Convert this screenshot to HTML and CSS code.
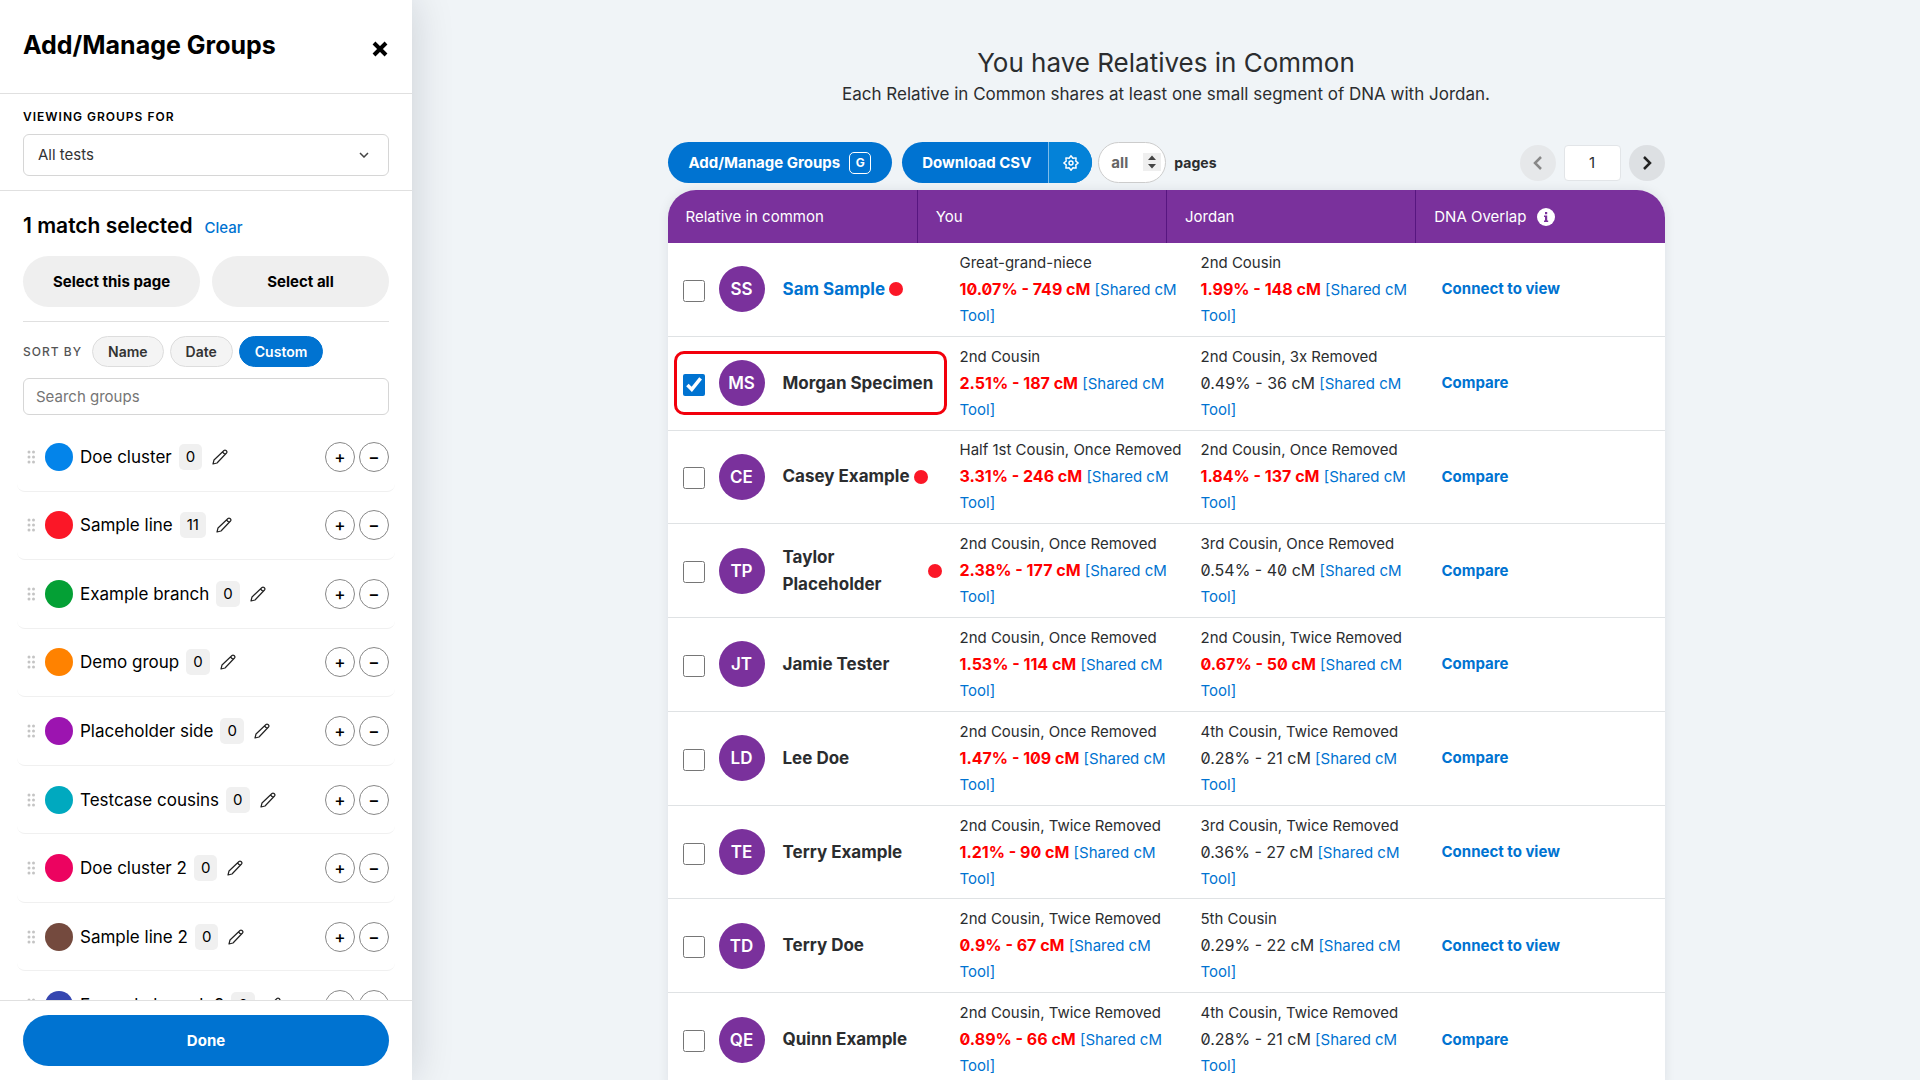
FILE: index.html
```html
<!doctype html>
<html lang="en">

<head>
	<meta charset="utf-8">
	<meta name="viewport" content="width=device-width, initial-scale=1">
	<title>Relatives in Common</title>
	<link rel="stylesheet" href="styles.css">
</head>

<body>

	<!-- shared icons -->
	<svg class="sprite" aria-hidden="true">
		<symbol id="grip" viewBox="0 0 8 14">
			<g fill="#c4c4c4">
				<circle cx="2" cy="2" r="1.5" /><circle cx="6.500" cy="2" r="1.5" />
				<circle cx="2" cy="7" r="1.5" /><circle cx="6.500" cy="7" r="1.5" />
				<circle cx="2" cy="12" r="1.5" /><circle cx="6.500" cy="12" r="1.5" />
			</g>
		</symbol>
		<symbol id="pencil" viewBox="0 0 16 16">
			<path d="M1 15l1-4L12 1.500q1-.9 2 0l.5.5q.9 1 0 2L5 14zM10.500 3l2.500 2.500" fill="none" stroke="#222" stroke-width="1.200" stroke-linejoin="round" />
		</symbol>
	</svg>

	<aside class="panel">

		<header class="panel-head">
			<h2>Add/Manage Groups</h2>
			<button class="close" aria-label="Close">
				<svg width="16" height="16" viewBox="0 0 16 16"><path d="M2 2l12 12M14 2L2 14" stroke="#000" stroke-width="4" /></svg>
			</button>
		</header>

		<div class="viewing">
			<label for="selTests">Viewing groups for</label>
			<div class="select-wrap">
				<select id="selTests"><option>All tests</option></select>
				<svg class="chevron" width="10" height="6" viewBox="0 0 10 6"><path d="M1 1l4 4 4-4" fill="none" stroke="#444" stroke-width="1.500" /></svg>
			</div>
		</div>

		<div class="picks">
			<div class="selected"><strong>1 match selected</strong> <a href="#">Clear</a></div>
			<div class="pick-buttons">
				<button>Select this page</button>
				<button>Select all</button>
			</div>
		</div>

		<div class="sort">
			<span>Sort by</span>
			<button>Name</button>
			<button>Date</button>
			<button class="active">Custom</button>
		</div>

		<input class="search" type="search" placeholder="Search groups" aria-label="Search groups">

		<div class="groups">
			<ul>
				<li>
					<svg class="grip"><use href="#grip" /></svg><i class="swatch blue"></i>
					<span class="name">Doe cluster</span><span class="count">0</span>
					<button class="edit" aria-label="Edit"><svg><use href="#pencil" /></svg></button>
					<button class="round" aria-label="Add">+</button><button class="round" aria-label="Remove">−</button>
				</li>
				<li>
					<svg class="grip"><use href="#grip" /></svg><i class="swatch red"></i>
					<span class="name">Sample line</span><span class="count">11</span>
					<button class="edit" aria-label="Edit"><svg><use href="#pencil" /></svg></button>
					<button class="round" aria-label="Add">+</button><button class="round" aria-label="Remove">−</button>
				</li>
				<li>
					<svg class="grip"><use href="#grip" /></svg><i class="swatch green"></i>
					<span class="name">Example branch</span><span class="count">0</span>
					<button class="edit" aria-label="Edit"><svg><use href="#pencil" /></svg></button>
					<button class="round" aria-label="Add">+</button><button class="round" aria-label="Remove">−</button>
				</li>
				<li>
					<svg class="grip"><use href="#grip" /></svg><i class="swatch orange"></i>
					<span class="name">Demo group</span><span class="count">0</span>
					<button class="edit" aria-label="Edit"><svg><use href="#pencil" /></svg></button>
					<button class="round" aria-label="Add">+</button><button class="round" aria-label="Remove">−</button>
				</li>
				<li>
					<svg class="grip"><use href="#grip" /></svg><i class="swatch purple"></i>
					<span class="name">Placeholder side</span><span class="count">0</span>
					<button class="edit" aria-label="Edit"><svg><use href="#pencil" /></svg></button>
					<button class="round" aria-label="Add">+</button><button class="round" aria-label="Remove">−</button>
				</li>
				<li>
					<svg class="grip"><use href="#grip" /></svg><i class="swatch teal"></i>
					<span class="name">Testcase cousins</span><span class="count">0</span>
					<button class="edit" aria-label="Edit"><svg><use href="#pencil" /></svg></button>
					<button class="round" aria-label="Add">+</button><button class="round" aria-label="Remove">−</button>
				</li>
				<li>
					<svg class="grip"><use href="#grip" /></svg><i class="swatch pink"></i>
					<span class="name">Doe cluster 2</span><span class="count">0</span>
					<button class="edit" aria-label="Edit"><svg><use href="#pencil" /></svg></button>
					<button class="round" aria-label="Add">+</button><button class="round" aria-label="Remove">−</button>
				</li>
				<li>
					<svg class="grip"><use href="#grip" /></svg><i class="swatch brown"></i>
					<span class="name">Sample line 2</span><span class="count">0</span>
					<button class="edit" aria-label="Edit"><svg><use href="#pencil" /></svg></button>
					<button class="round" aria-label="Add">+</button><button class="round" aria-label="Remove">−</button>
				</li>
				<li>
					<svg class="grip"><use href="#grip" /></svg><i class="swatch indigo"></i>
					<span class="name">Example branch 2</span><span class="count">0</span>
					<button class="edit" aria-label="Edit"><svg><use href="#pencil" /></svg></button>
					<button class="round" aria-label="Add">+</button><button class="round" aria-label="Remove">−</button>
				</li>
			</ul>
		</div>

		<footer class="panel-foot"><button>Done</button></footer>

	</aside>

	<main>

		<h1>You have Relatives in Common</h1>
		<p class="intro">Each Relative in Common shares at least one small segment of DNA with Jordan.</p>

		<div class="toolbar">
			<button class="pill">Add/Manage Groups <kbd>G</kbd></button>
			<div class="split">
				<button class="csv">Download CSV</button>
				<button class="gear" aria-label="CSV settings">
					<svg width="16" height="16" viewBox="0 0 16 16" fill="none" stroke="#fff" stroke-width="1.400" stroke-linejoin="round">
						<path d="M8 .8L9.900 3.200 13.100 2.900 12.800 6.100 15.200 8 12.800 9.900 13.100 13.100 9.900 12.800 8 15.200 6.100 12.800 2.900 13.100 3.200 9.900.8 8 3.200 6.100 2.900 2.900 6.100 3.200z" />
						<circle cx="8" cy="8" r="2" />
					</svg>
				</button>
			</div>
			<div class="pages">
				<input id="txtPages" type="text" value="all">
				<svg class="spin" width="18" height="18" viewBox="0 0 18 18"><path d="M5 7l4-4.500L13 7zM5 11l4 4.500 4-4.500z" fill="#444" /></svg>
			</div>
			<label for="txtPages">pages</label>

			<nav class="pager">
				<button disabled aria-label="Previous page"><svg width="12" height="16" viewBox="0 0 12 16"><path d="M9 2L3 8l6 6" fill="none" stroke="currentColor" stroke-width="2.500" /></svg></button>
				<input type="text" value="1" aria-label="Page">
				<button aria-label="Next page"><svg width="12" height="16" viewBox="0 0 12 16"><path d="M3 2l6 6-6 6" fill="none" stroke="currentColor" stroke-width="2.500" /></svg></button>
			</nav>
		</div>

		<table>
			<thead>
				<tr>
					<th>Relative in common</th>
					<th>You</th>
					<th>Jordan</th>
					<th>DNA Overlap
						<svg class="info" width="18" height="18" viewBox="0 0 18 18"><circle cx="9" cy="9" r="9" fill="#fff" /><path d="M8 4h2.200v2.200H8zM7 7.500h3.200v5h1V14H7v-1.500h1V9H7z" fill="#7a319c" /></svg>
					</th>
				</tr>
			</thead>
			<tbody>
				<tr>
					<td class="who"><input type="checkbox" aria-label="Sam Sample"><span class="avatar">SS</span><a href="#" class="person">Sam Sample</a><i class="dot"></i></td>
					<td>Great-grand-niece<br><b class="near">10.07% - 749 cM</b> <a href="#">[Shared cM Tool]</a></td>
					<td>2nd Cousin<br><b class="near">1.99% - 148 cM</b> <a href="#">[Shared cM Tool]</a></td>
					<td class="action"><a href="#">Connect to view</a></td>
				</tr>
				<tr>
					<td class="who marked"><input type="checkbox" aria-label="Morgan Specimen" checked><span class="avatar">MS</span><span class="person">Morgan Specimen</span></td>
					<td>2nd Cousin<br><b class="near">2.51% - 187 cM</b> <a href="#">[Shared cM Tool]</a></td>
					<td>2nd Cousin, 3x Removed<br><span class="far">0.49% - 36 cM</span> <a href="#">[Shared cM Tool]</a></td>
					<td class="action"><a href="#">Compare</a></td>
				</tr>
				<tr>
					<td class="who"><input type="checkbox" aria-label="Casey Example"><span class="avatar">CE</span><span class="person">Casey Example</span><i class="dot"></i></td>
					<td>Half 1st Cousin, Once Removed<br><b class="near">3.31% - 246 cM</b> <a href="#">[Shared cM Tool]</a></td>
					<td>2nd Cousin, Once Removed<br><b class="near">1.84% - 137 cM</b> <a href="#">[Shared cM Tool]</a></td>
					<td class="action"><a href="#">Compare</a></td>
				</tr>
				<tr>
					<td class="who"><input type="checkbox" aria-label="Taylor Placeholder"><span class="avatar">TP</span><span class="person">Taylor Placeholder</span><i class="dot"></i></td>
					<td>2nd Cousin, Once Removed<br><b class="near">2.38% - 177 cM</b> <a href="#">[Shared cM Tool]</a></td>
					<td>3rd Cousin, Once Removed<br><span class="far">0.54% - 40 cM</span> <a href="#">[Shared cM Tool]</a></td>
					<td class="action"><a href="#">Compare</a></td>
				</tr>
				<tr>
					<td class="who"><input type="checkbox" aria-label="Jamie Tester"><span class="avatar">JT</span><span class="person">Jamie Tester</span></td>
					<td>2nd Cousin, Once Removed<br><b class="near">1.53% - 114 cM</b> <a href="#">[Shared cM Tool]</a></td>
					<td>2nd Cousin, Twice Removed<br><b class="near">0.67% - 50 cM</b> <a href="#">[Shared cM Tool]</a></td>
					<td class="action"><a href="#">Compare</a></td>
				</tr>
				<tr>
					<td class="who"><input type="checkbox" aria-label="Lee Doe"><span class="avatar">LD</span><span class="person">Lee Doe</span></td>
					<td>2nd Cousin, Once Removed<br><b class="near">1.47% - 109 cM</b> <a href="#">[Shared cM Tool]</a></td>
					<td>4th Cousin, Twice Removed<br><span class="far">0.28% - 21 cM</span> <a href="#">[Shared cM Tool]</a></td>
					<td class="action"><a href="#">Compare</a></td>
				</tr>
				<tr>
					<td class="who"><input type="checkbox" aria-label="Terry Example"><span class="avatar">TE</span><span class="person">Terry Example</span></td>
					<td>2nd Cousin, Twice Removed<br><b class="near">1.21% - 90 cM</b> <a href="#">[Shared cM Tool]</a></td>
					<td>3rd Cousin, Twice Removed<br><span class="far">0.36% - 27 cM</span> <a href="#">[Shared cM Tool]</a></td>
					<td class="action"><a href="#">Connect to view</a></td>
				</tr>
				<tr>
					<td class="who"><input type="checkbox" aria-label="Terry Doe"><span class="avatar">TD</span><span class="person">Terry Doe</span></td>
					<td>2nd Cousin, Twice Removed<br><b class="near">0.9% - 67 cM</b> <a href="#">[Shared cM Tool]</a></td>
					<td>5th Cousin<br><span class="far">0.29% - 22 cM</span> <a href="#">[Shared cM Tool]</a></td>
					<td class="action"><a href="#">Connect to view</a></td>
				</tr>
				<tr>
					<td class="who"><input type="checkbox" aria-label="Quinn Example"><span class="avatar">QE</span><span class="person">Quinn Example</span></td>
					<td>2nd Cousin, Twice Removed<br><b class="near">0.89% - 66 cM</b> <a href="#">[Shared cM Tool]</a></td>
					<td>4th Cousin, Twice Removed<br><span class="far">0.28% - 21 cM</span> <a href="#">[Shared cM Tool]</a></td>
					<td class="action"><a href="#">Compare</a></td>
				</tr>
			</tbody>
		</table>

	</main>

</body>

</html>
```
FILE: styles.css
```css
* {
	box-sizing: border-box;
}

:root {
	--blue: #0073d1;
	--purple: #7a319c;
	--red: #fb1727;
	--panel-width: 412px;
}

body {
	background-color: #f0f4f7;
	color: #2b2d2f;
	display: grid;
	font: 15px/26px Inter, "Liberation Sans", sans-serif;
	grid-template-columns: var(--panel-width) 1fr;
	height: 100vh;
	margin: 0;
	overflow: hidden;
}

a {
	color: var(--blue);
	text-decoration: none;
}

a:hover {
	text-decoration: underline;
}

button,
input,
select {
	color: inherit;
	font: inherit;
	margin: 0;
}

button {
	align-items: center;
	border: none;
	cursor: pointer;
	display: flex;
	justify-content: center;
	padding: 0;
}

.sprite {
	display: none;
}

/* side panel */

.panel {
	background-color: #fff;
	box-shadow: 0 0 40px rgba(0, 20, 40, 0.16);
	color: #000;
	display: flex;
	flex-direction: column;
	height: 100vh;
	z-index: 1;
}

.panel-head {
	align-items: center;
	border-bottom: 1px solid #e0e0e0;
	display: flex;
	height: 94px;
	justify-content: space-between;
	padding: 0 24px 4px 23px;
}

.panel-head h2 {
	font-size: 25px;
	font-weight: 700;
	margin: 0;
}

.close {
	background: none;
	padding-top: 8px;
}

.viewing {
	border-bottom: 1px solid #e0e0e0;
	padding: 14px 23px;
}

.viewing label {
	display: block;
	font-size: 12px;
	font-weight: 600;
	letter-spacing: 1px;
	line-height: 18px;
	margin-bottom: 8px;
	text-transform: uppercase;
}

.select-wrap {
	position: relative;
}

.select-wrap select {
	appearance: none;
	background-color: #fff;
	border: 1px solid #d6d6d6;
	border-radius: 6px;
	color: #333;
	display: block;
	height: 42px;
	padding: 0 14px;
	width: 100%;
}

.chevron {
	pointer-events: none;
	position: absolute;
	right: 20px;
	top: 18px;
}

.picks {
	border-bottom: 1px solid #e0e0e0;
	margin: 0 23px;
	padding: 21px 0 14px;
}

.selected {
	align-items: baseline;
	display: flex;
	gap: 12px;
	line-height: 28px;
	margin-bottom: 14px;
}

.selected strong {
	font-size: 21px;
	font-weight: 600;
}

.selected a {
	font-size: 15px;
	font-weight: 500;
}

.pick-buttons {
	display: grid;
	gap: 12px;
	grid-template-columns: 1fr 1fr;
}

.pick-buttons button,
.panel-foot button {
	background-color: #efefef;
	border-radius: 26px;
	font-weight: 700;
	height: 51px;
}

.sort {
	align-items: center;
	display: flex;
	gap: 6px;
	margin: 14px 23px 11px;
}

.sort span {
	color: #555;
	font-size: 12px;
	font-weight: 500;
	letter-spacing: 1px;
	margin-right: 4px;
	text-transform: uppercase;
}

.sort button {
	background-color: #f4f4f4;
	border: 1px solid #ddd;
	border-radius: 16px;
	color: #333;
	font-size: 14px;
	font-weight: 600;
	height: 31px;
	padding: 0 15px;
}

.sort .active {
	background-color: var(--blue);
	border-color: var(--blue);
	color: #fff;
}

.search {
	appearance: none;
	border: 1px solid #d6d6d6;
	border-radius: 6px;
	flex: none;
	height: 37px;
	margin: 0 23px 8px;
	padding: 0 12px;
}

.search::placeholder {
	color: #757575;
}

.groups {
	flex: 1;
	min-height: 0;
	overflow: hidden;
	padding: 0 17px;
}

.groups ul {
	display: grid;
	grid-auto-rows: 1fr;
	height: 617px;
	list-style: none;
	margin: 0;
	padding: 0;
}

.groups li {
	align-items: center;
	border-bottom: 1px solid #f0f0f0;
	border-radius: 8px;
	display: flex;
	padding: 0 6px 0 10px;
}

.grip {
	height: 14px;
	width: 8px;
}

.swatch {
	border-radius: 50%;
	height: 28px;
	margin: 0 7px 0 10px;
	width: 28px;
}

.blue { background-color: #0384ea; }
.red { background-color: #fb1727; }
.green { background-color: #04a035; }
.orange { background-color: #ff8200; }
.purple { background-color: #9c14b0; }
.teal { background-color: #00a9bf; }
.pink { background-color: #ec0360; }
.brown { background-color: #744a3e; }
.indigo { background-color: #3546b0; }

.name {
	font-size: 17px;
	font-weight: 400;
}

.count {
	background-color: #f0f0f0;
	border-radius: 5px;
	margin: 0 10px 0 7px;
	padding: 0 7px;
}

.edit {
	background: none;
	margin-right: auto;
}

.edit svg {
	height: 16px;
	width: 16px;
}

.round {
	background-color: #fff;
	border: 1px solid #888;
	border-radius: 50%;
	font-size: 17px;
	font-weight: 500;
	height: 30px;
	margin-left: 4px;
	width: 30px;
}

.panel-foot {
	border-top: 1px solid #e0e0e0;
	padding: 14px 23px;
}

.panel-foot button {
	background-color: var(--blue);
	color: #fff;
	width: 100%;
}

/* relatives list */

main {
	margin: 0 auto;
	max-width: 997px;
	min-width: 0;
	padding-top: 46px;
	width: 100%;
}

h1 {
	font-size: 26px;
	font-weight: 400;
	line-height: 34px;
	margin: 0;
	text-align: center;
}

.intro {
	font-size: 17px;
	line-height: 28px;
	margin: 0 0 34px;
	text-align: center;
}

.toolbar {
	align-items: center;
	display: flex;
	font-weight: 700;
	height: 41px;
	margin-bottom: 7px;
}

.toolbar > label {
	font-size: 14px;
	margin-left: 8px;
}

.pill,
.split {
	background-color: var(--blue);
	border-radius: 21px;
	color: #fff;
	height: 41px;
}

.pill {
	gap: 9px;
	margin-right: 10px;
	padding: 0 21px;
}

kbd {
	border: 1px solid #fff;
	border-radius: 5px;
	font: 700 12px/20px Inter, sans-serif;
	width: 22px;
}

.split {
	display: flex;
	margin-right: 6px;
	overflow: hidden;
}

.split button {
	background: none;
	color: inherit;
}

.csv {
	padding: 0 17px 0 20px;
}

.split .gear {
	background-color: #0482d8;
	border-left: 1px solid #7fbcea;
	width: 44px;
}

.pages {
	position: relative;
}

.pages input {
	background-color: #fff;
	border: 1px solid #ccc;
	border-radius: 21px;
	color: #666;
	height: 41px;
	padding: 0 12px;
	width: 68px;
}

.spin {
	background-color: #efefef;
	position: absolute;
	right: 5px;
	top: 11px;
}

.pager {
	display: flex;
	gap: 8px;
	margin-left: auto;
}

.pager button {
	background-color: #dde0e3;
	border-radius: 50%;
	color: #222;
	height: 36px;
	width: 36px;
}

.pager button:disabled {
	background-color: #e6e8ea;
	color: #888;
}

.pager input {
	background-color: #fff;
	border: 1px solid #e2e5e8;
	border-radius: 4px;
	font-weight: 400;
	height: 36px;
	text-align: center;
	width: 57px;
}

table,
thead,
tbody {
	display: block;
}

table {
	background-color: #fff;
	border-radius: 28px 28px 0 0;
	box-shadow: 0 0 12px rgba(0, 20, 40, 0.08);
}

tr {
	display: grid;
}

thead {
	background-color: var(--purple);
	border-radius: 28px 28px 0 0;
	color: #fff;
}

thead tr {
	grid-template-columns: repeat(4, 1fr);
	height: 53px;
}

th {
	align-items: center;
	display: flex;
	font-weight: 400;
	gap: 11px;
	padding: 0 18px;
}

th + th {
	border-left: 1px solid #571680;
}

tbody {
	display: grid;
	grid-auto-rows: 1fr;
	height: 844px;
}

tbody tr {
	align-items: center;
	border-bottom: 1px solid #dfe2e4;
	grid-template-columns: 292px 241px 241px 1fr;
}

td {
	padding: 0 10px 0 0;
}

.near,
.far {
	font-feature-settings: "zero";
	font-size: 16px;
}

.near {
	color: #f00;
	font-weight: 700;
}

.who {
	align-items: center;
	display: flex;
	padding: 0 18px 0 15px;
	position: relative;
}

.who input {
	accent-color: var(--blue);
	flex: none;
	height: 22px;
	margin: 3px 14px 0 0;
	width: 22px;
}

.avatar {
	background-color: var(--purple);
	border-radius: 50%;
	color: #fff;
	flex: none;
	font-size: 17px;
	font-weight: 600;
	height: 46px;
	line-height: 46px;
	margin-right: 18px;
	text-align: center;
	width: 46px;
}

.person {
	font-size: 17px;
	font-weight: 700;
	line-height: 27px;
}

.dot {
	background-color: var(--red);
	border-radius: 50%;
	flex: none;
	height: 14px;
	margin-left: 4px;
	width: 14px;
}

.marked::after {
	border: 3px solid #f2000c;
	border-radius: 10px;
	content: "";
	inset: -9px 13px -9px 6px;
	pointer-events: none;
	position: absolute;
}

.action {
	font-weight: 700;
}
```
